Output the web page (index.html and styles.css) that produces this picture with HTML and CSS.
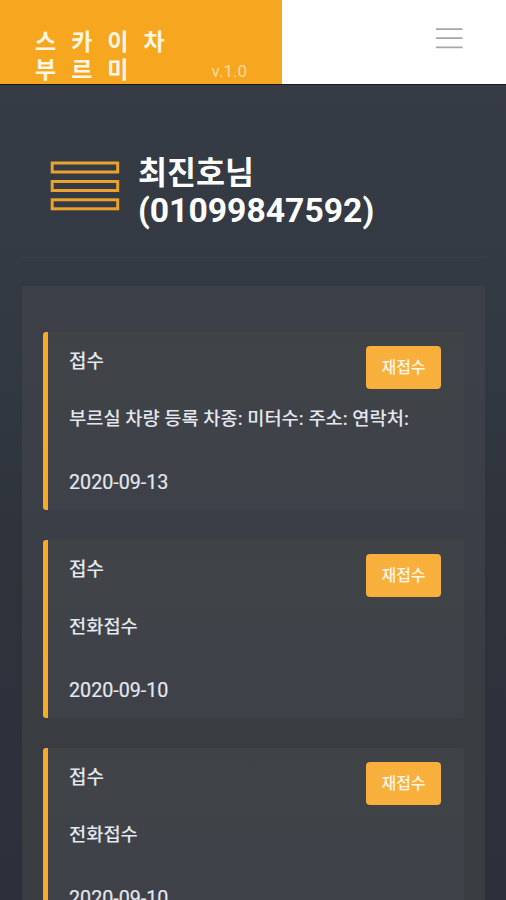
FILE: index.html
```
<!DOCTYPE html>
<html lang="ko">
<head>
    <meta charset="UTF-8">
    <meta name="viewport" content="width=device-width, initial-scale=1.0">
    <title>스카이차 부르미</title>
    <link rel="stylesheet" href="styles.css">
</head>
<body>
    <header class="header">
        <div class="brand">
            <div class="logo">스카이차<br>부르미</div>
            <span class="version">v.1.0</span>
        </div>
        <button class="menu-button" aria-label="메뉴">
            <svg width="28" height="24" viewBox="0 0 28 24">
                <path d="M1 2.2H27.5M1 11.2H27.5M1 20.3H27.5" stroke="#a3a6a8" stroke-width="1.8"/>
            </svg>
        </button>
    </header>
    <main class="container">
        <div class="profile">
            <svg class="profile-icon" width="70" height="50" viewBox="0 0 70 50" fill="none" stroke="#e9a22e" stroke-width="3">
                <rect x="2.2" y="2" width="65.5" height="9"/>
                <rect x="2.2" y="20.5" width="65.5" height="9"/>
                <rect x="2.2" y="38.8" width="65.5" height="9"/>
            </svg>
            <h1>최진호님<br><span class="phone">(01099847592)</span></h1>
        </div>
        <div class="panel">
            <div class="card">
                <div class="card-head">
                    <h3>접수</h3>
                    <button class="retry">재접수</button>
                </div>
                <p class="memo">부르실 차량 등록 차종: 미터수: 주소: 연락처:</p>
                <p class="date">2020-09-13</p>
            </div>
            <div class="card">
                <div class="card-head">
                    <h3>접수</h3>
                    <button class="retry">재접수</button>
                </div>
                <p class="memo">전화접수</p>
                <p class="date">2020-09-10</p>
            </div>
            <div class="card">
                <div class="card-head">
                    <h3>접수</h3>
                    <button class="retry">재접수</button>
                </div>
                <p class="memo">전화접수</p>
                <p class="date">2020-09-10</p>
            </div>
        </div>
    </main>
</body>
</html>
```
FILE: styles.css
```
* {
    box-sizing: border-box;
}
body {
    margin: 0;
    height: 900px;
    overflow: hidden;
    font-family: Roboto, "Noto Sans CJK KR", sans-serif;
    color: #e4e7ee;
    background: linear-gradient(#363b44 0, #343a43 280px, #2d323b 560px, #2c303a 100%);
}
h1, h3, p {
    margin: 0;
}
button {
    border: none;
    padding: 0;
    font-family: inherit;
    cursor: pointer;
}
.header {
    display: flex;
    justify-content: space-between;
    height: 85px;
    background: #fff;
    border-bottom: 1px solid #16191d;
}
.brand {
    display: flex;
    justify-content: space-between;
    width: 282px;
    padding: 28px 35px 0;
    background: #f6a71f;
    color: #fff6e3;
}
.logo {
    padding-top: 1px;
    font-size: 23px;
    font-weight: 700;
    line-height: 28px;
    letter-spacing: 15px;
    white-space: nowrap;
}
.version {
    padding-top: 33px;
    font-size: 17px;
    line-height: 20px;
    color: #fbdb9e;
}
.menu-button {
    width: 28px;
    height: 24px;
    margin: 27px 43px 0 0;
    background: none;
}
.menu-button svg {
    display: block;
}
.container {
    padding: 0 21px 0 22px;
}
.profile {
    display: flex;
    height: 173px;
    padding: 69px 0 0 28px;
    border-bottom: 1px solid #3a3f48;
}
.profile-icon {
    margin: 7px 18px 0 0;
}
.profile h1 {
    padding-top: 1px;
    color: #fff;
    font-size: 31.5px;
    font-weight: 700;
    line-height: 37px;
}
.phone {
    font-size: 33.7px;
}
.panel {
    margin-top: 28px;
    padding: 46px 21px 30px;
    border-radius: 4px;
    background: linear-gradient(#3d4048, #3a3e46 260px, #393c41 420px, #393c41);
}
.card {
    height: 178px;
    margin-bottom: 30px;
    padding: 14px 23px 0 21px;
    border-left: 5px solid #f8aa27;
    border-radius: 3px;
    background: linear-gradient(#404346, #3e4149);
}
.card-head {
    display: flex;
    justify-content: space-between;
}
.card h3 {
    padding-top: 2px;
    font-size: 19px;
    font-weight: 500;
    line-height: 28px;
}
.retry {
    width: 75px;
    height: 43px;
    padding-bottom: 3px;
    border-radius: 4px;
    background: #f8af3b;
    color: #fff5e6;
    font-size: 16px;
    font-weight: 500;
}
.memo {
    margin-top: 15px;
    font-size: 18.7px;
    font-weight: 500;
    line-height: 30px;
    white-space: nowrap;
}
.date {
    margin-top: 34px;
    font-size: 19.7px;
    line-height: 30px;
    -webkit-text-stroke: 0.2px;
}
```
